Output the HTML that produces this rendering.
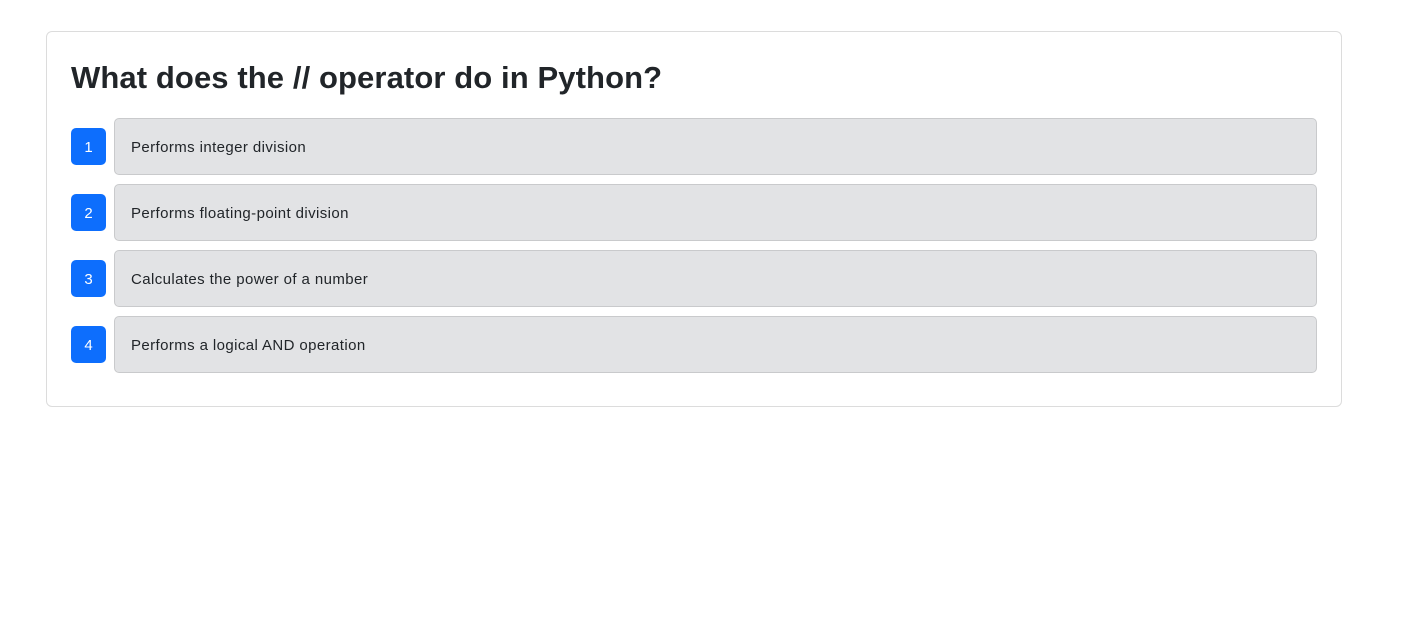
<!DOCTYPE html>
<html><head><style>
body{margin:0;background:#fff;font-family:"Liberation Sans",sans-serif;color:#212529}
.card{position:absolute;left:46px;top:31px;width:1294px;height:374px;border:1px solid #dcdcdc;border-radius:6px}
h1{position:absolute;left:24px;top:26px;margin:0;font-size:31px;font-weight:bold;line-height:40px;letter-spacing:0.1px}
.row{position:absolute;left:24px;height:57px;width:1246px}
.b{position:absolute;left:0;top:10px;width:35px;height:37px;background:#0d6efd;color:#fff;border-radius:5px;font-size:15px;line-height:39px;text-align:center}
.o{position:absolute;left:43px;top:0;height:55px;background:#e2e3e5;border:1px solid #c9cacc;border-radius:5px;font-size:15px;line-height:58px;padding-left:16px;box-sizing:content-box;width:1185px;letter-spacing:0.4px}
</style></head><body>
<div class="card">
<h1>What does the // operator do in Python?</h1>
<div class="row" style="top:86px"><div class="b">1</div><div class="o">Performs integer division</div></div>
<div class="row" style="top:152px"><div class="b">2</div><div class="o">Performs floating-point division</div></div>
<div class="row" style="top:218px"><div class="b">3</div><div class="o">Calculates the power of a number</div></div>
<div class="row" style="top:284px"><div class="b">4</div><div class="o">Performs a logical AND operation</div></div>
</div>
</body></html>
